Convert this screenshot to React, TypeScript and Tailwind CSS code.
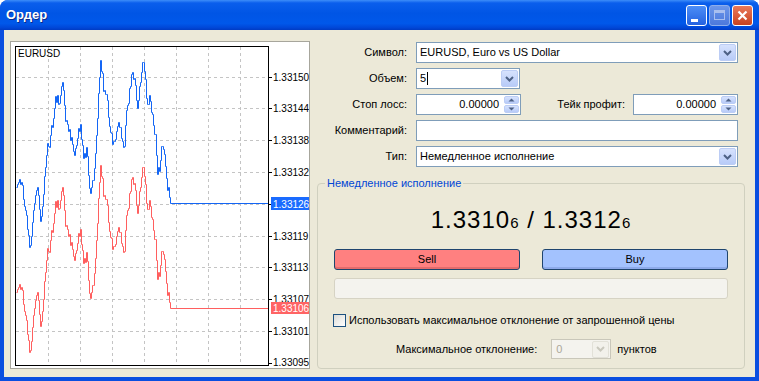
import React from "react";

function mulberry32(a: number) {
  return function () {
    a |= 0;
    a = (a + 0x6d2b79f5) | 0;
    let t = Math.imul(a ^ (a >>> 15), 1 | a);
    t = (t + Math.imul(t ^ (t >>> 7), 61 | t)) ^ t;
    return ((t ^ (t >>> 14)) >>> 0) / 4294967296;
  };
}

const KEYS: [number, number][] = [
  [16, 187], [19, 177], [21, 180], [23, 200], [26, 215], [29, 244], [31, 240], [33, 215],
  [36, 190], [38, 195], [40, 222], [42, 200], [45, 165], [47, 150], [50, 135], [53, 120],
  [55, 95], [58, 100], [61, 92], [63, 88], [65, 120], [68, 128], [70, 140], [73, 150],
  [76, 145], [80, 125], [83, 158], [86, 150], [88, 175], [90, 198], [93, 175], [96, 135],
  [98, 90], [100, 63], [103, 88], [106, 100], [109, 125], [112, 145], [115, 130], [118, 120],
  [121, 138], [124, 140], [127, 105], [130, 80], [132, 68], [135, 90], [137, 108], [140, 80],
  [143, 63], [146, 95], [149, 100], [152, 112], [155, 140], [157, 175], [160, 165], [162, 142],
  [164, 150], [166, 170], [168, 190], [170, 203],
];

function buildPoints() {
  const rnd = mulberry32(11);
  const pts: number[] = [];
  let n = 0;
  for (let x = 16; x <= 170; x++) {
    let i = 0;
    while (i < KEYS.length - 2 && KEYS[i + 1][0] < x) i++;
    const [x0, y0] = KEYS[i];
    const [x1, y1] = KEYS[i + 1];
    const t = x1 === x0 ? 0 : Math.max(0, Math.min(1, (x - x0) / (x1 - x0)));
    const base = y0 + (y1 - y0) * t;
    n = n * 0.35 + (rnd() - 0.5) * 14;
    let y = base + n;
    if (x >= 169) y = base;
    pts.push(Math.round(y));
  }
  return pts;
}

const PTS = buildPoints();

function toPath(dy: number, endY: number) {
  let d = `M16.5 ${PTS[0] + dy + 0.5}`;
  for (let i = 1; i < PTS.length; i++) {
    d += ` H${16 + i + 0.5} V${PTS[i] + dy + 0.5}`;
  }
  d += ` V${endY + 0.5} H268`;
  return d;
}

const GRID_Y = [0, 1, 2, 3, 4, 5, 6, 7, 8].map((k) => 76.5 + 31.8 * k);
const GRID_X = [0, 1, 2, 3, 4, 5, 6].map((k) => 48.5 + 32 * k);
const LABELS = ["1.33150", "1.33144", "1.33138", "1.33132", "", "1.33119", "1.33113", "1.33107", "1.33101"];

function Chart() {
  return (
    <div className="w-[300px] h-[328px] border border-[#A7A69C] bg-white">
      <svg width={298} height={326} viewBox="11 42 298 326" className="block">
        <rect x={11} y={42} width={298} height={326} fill="#fff" />
        {GRID_Y.map((y, i) => (
          <line key={"h" + i} x1={16} x2={268} y1={Math.round(y) + 0.5} y2={Math.round(y) + 0.5} stroke="#C4C4C4" strokeDasharray="3 3" />
        ))}
        {GRID_X.map((x, i) => (
          <line key={"v" + i} x1={x} x2={x} y1={47} y2={365} stroke="#C4C4C4" strokeDasharray="3 3" />
        ))}
        <path d={toPath(105, 308)} fill="none" stroke="#FF5F5F" strokeWidth={1} />
        <path d={toPath(0, 203)} fill="none" stroke="#1466F5" strokeWidth={1} />
        <rect x={15.5} y={46.5} width={253} height={319} fill="none" stroke="#000" />
        {GRID_Y.map((y, i) => (
          <line key={"t" + i} x1={268} x2={272} y1={Math.round(y) + 0.5} y2={Math.round(y) + 0.5} stroke="#000" />
        ))}
        <line x1={268} x2={272} y1={363.5} y2={363.5} stroke="#000" />
        <g fontFamily="'Liberation Sans', Arial, sans-serif" fontSize={10} fill="#000">
          <text x={18} y={57} fontSize={10}>EURUSD</text>
          {GRID_Y.map((y, i) =>
            LABELS[i] ? (
              <text key={"l" + i} x={273} y={Math.round(y) + 4}>
                {LABELS[i]}
              </text>
            ) : null
          )}
          <text x={273} y={366}>1.33095</text>
          <rect x={271} y={197} width={38} height={13} fill="#1A6BFF" />
          <text x={273} y={207.5} fill="#fff">1.33126</text>
          <rect x={271} y={302} width={38} height={12} fill="#FF6464" />
          <text x={273} y={312} fill="#fff">1.33106</text>
        </g>
      </svg>
    </div>
  );
}

function Chevron({ color = "#4D6185" }: { color?: string }) {
  return (
    <svg width="9" height="6" viewBox="0 0 9 6">
      <path d="M1 1 L4.5 4.5 L8 1" fill="none" stroke={color} strokeWidth="2" />
    </svg>
  );
}

function DropBtn({ disabled = false }: { disabled?: boolean }) {
  return (
    <div
      className={
        disabled
          ? "mr-[1px] flex h-[17px] w-[17px] items-center justify-center rounded-[2px] border border-[#E2E1D8] bg-[#F2F1EB]"
          : "mr-[1px] flex h-[17px] w-[17px] items-center justify-center rounded-[2px] border border-[#BCCDF5] bg-[linear-gradient(to_bottom,#D6E2FD,#B8CBF8)]"
      }
    >
      <Chevron color={disabled ? "#C9C8BD" : "#4D6185"} />
    </div>
  );
}

function SpinBtn() {
  return (
    <div className="mr-[1px] flex h-[17px] w-[15px] flex-col gap-[1px]">
      <div className="flex h-[8px] items-center justify-center rounded-[2px] border border-[#BCCDF5] bg-[linear-gradient(to_bottom,#D6E2FD,#B8CBF8)]">
        <svg width="7" height="4" viewBox="0 0 7 4">
          <path d="M0.5 3.5 L3.5 0.5 L6.5 3.5 Z" fill="#4D6185" />
        </svg>
      </div>
      <div className="flex h-[8px] items-center justify-center rounded-[2px] border border-[#BCCDF5] bg-[linear-gradient(to_bottom,#D6E2FD,#B8CBF8)]">
        <svg width="7" height="4" viewBox="0 0 7 4">
          <path d="M0.5 0.5 L3.5 3.5 L6.5 0.5 Z" fill="#4D6185" />
        </svg>
      </div>
    </div>
  );
}

function Label({ children }: { children: React.ReactNode }) {
  return <div className="w-[97px] shrink-0 text-right">{children}</div>;
}

function TitleBar() {
  return (
    <div className="flex h-[30px] shrink-0 items-center rounded-t-[8px] bg-[linear-gradient(to_bottom,#3D8DF9_0%,#0A5EEC_10%,#0055E5_45%,#0058EA_78%,#0047D8_92%,#003BC3_100%)] pl-[6px] pr-[6px]">
      <div className="flex-1 text-[13px] font-bold text-white [text-shadow:1px_1px_0_#0B2A8A]">Ордер</div>
      <div className="flex items-center gap-[2px]">
        <div className="relative h-[21px] w-[21px] rounded-[3px] border border-white bg-[linear-gradient(to_bottom,#4C8EF7,#2462E0)]">
          <div className="absolute left-[4px] top-[13px] h-[3px] w-[7px] bg-white" />
        </div>
        <div className="relative flex h-[21px] w-[21px] items-center justify-center rounded-[3px] border border-[#8FAEEB] bg-[linear-gradient(to_bottom,#6C96EA,#4C79DC)]">
          <div className="h-[10px] w-[11px] border border-t-[3px] border-[#A9BFEF]" />
        </div>
        <div className="relative flex h-[21px] w-[21px] items-center justify-center rounded-[3px] border border-white bg-[linear-gradient(to_bottom,#E9795A,#C9421F)]">
          <svg width="11" height="11" viewBox="0 0 11 11">
            <path d="M1.5 1.5 L9.5 9.5 M9.5 1.5 L1.5 9.5" stroke="#fff" strokeWidth="2.2" />
          </svg>
        </div>
      </div>
    </div>
  );
}

export default function App() {
  return (
    <div className="h-[381px] w-[759px] bg-white font-['Liberation_Sans',Arial,sans-serif] text-[11px] text-black">
      <div className="flex h-full w-full flex-col rounded-t-[8px] bg-[#0A4EE0]">
        <TitleBar />
        <div className="mx-[4px] mb-[4px] flex flex-1 bg-[#ECE9D8] pb-[8px] pl-[6px] pt-[11px]">
          <Chart />
          <div className="flex flex-1 flex-col">
            <div className="flex flex-col gap-[5px] pr-[17px] pt-[1px]">
              <div className="flex h-[21px] items-center gap-[9px]">
                <Label>Символ:</Label>
                <div className="flex h-[21px] flex-1 items-center border border-[#7F9DB9] bg-white">
                  <span className="flex-1 pl-[3px]">EURUSD, Euro vs US Dollar</span>
                  <DropBtn />
                </div>
              </div>
              <div className="flex h-[21px] items-center gap-[9px]">
                <Label>Объем:</Label>
                <div className="flex h-[21px] w-[104px] items-center border border-[#7F9DB9] bg-white">
                  <span className="flex flex-1 items-center pl-[3px]">
                    5<span className="ml-[1px] inline-block h-[13px] w-[1px] bg-black" />
                  </span>
                  <DropBtn />
                </div>
              </div>
              <div className="flex h-[21px] items-center">
                <Label>Стоп лосс:</Label>
                <div className="ml-[9px] flex h-[21px] w-[105px] items-center border border-[#7F9DB9] bg-white">
                  <span className="flex-1 pr-[5px] text-right">0.00000</span>
                  <SpinBtn />
                </div>
                <div className="flex-1 text-right">Тейк профит:</div>
                <div className="ml-[8px] flex h-[21px] w-[105px] items-center border border-[#7F9DB9] bg-white">
                  <span className="flex-1 pr-[5px] text-right">0.00000</span>
                  <SpinBtn />
                </div>
              </div>
              <div className="flex h-[21px] items-center gap-[9px]">
                <Label>Комментарий:</Label>
                <div className="h-[21px] flex-1 border border-[#7F9DB9] bg-white" />
              </div>
              <div className="flex h-[21px] items-center gap-[9px]">
                <Label>Тип:</Label>
                <div className="flex h-[21px] flex-1 items-center border border-[#7F9DB9] bg-white">
                  <span className="flex-1 pl-[3px]">Немедленное исполнение</span>
                  <DropBtn />
                </div>
              </div>
            </div>
            <fieldset className="ml-[7px] mr-[10px] mt-[10px] flex flex-1 flex-col rounded-[4px] border border-[#D0D0BF]">
              <legend className="ml-[7px] px-[2px] text-[11px] leading-[13px] text-[#0046D5]">Немедленное исполнение</legend>
              <div className="flex flex-1 flex-col px-[16px]">
                <div className="mt-[15px] h-[30px] text-center text-[24px] leading-[30px] tracking-[1px] text-black">
                  1.3310<span className="text-[15px]">6</span> / 1.3312<span className="text-[15px]">6</span>
                </div>
                <div className="mt-[14px] flex justify-between">
                  <div className="flex h-[21px] w-[186px] items-center justify-center rounded-[3px] border border-[#1F456E] bg-[#FF8080] shadow-[inset_0_-2px_0_#E46C6C]">
                    Sell
                  </div>
                  <div className="flex h-[21px] w-[186px] items-center justify-center rounded-[3px] border border-[#1F456E] bg-[#A3C2FE] shadow-[inset_0_-2px_0_#8DAAEA]">
                    Buy
                  </div>
                </div>
                <div className="mt-[8px] h-[21px] rounded-[3px] border border-[#D6D3C4] bg-[#F4F3EE]" />
                <div className="mt-[15px] ml-[-1px] flex h-[13px] items-center gap-[3px]">
                  <div className="h-[13px] w-[13px] border border-[#1C5180] bg-[linear-gradient(135deg,#DCDCD7,#FFFFFF)]" />
                  <span>Использовать максимальное отклонение от запрошенной цены</span>
                </div>
                <div className="ml-[62px] mt-[12px] flex h-[20px] items-center">
                  <span>Максимальное отклонение:</span>
                  <div className="ml-[14px] flex h-[20px] w-[60px] items-center border border-[#C9C7BA] bg-[#F4F3EE]">
                    <span className="flex-1 pl-[4px] text-[#ACA899]">0</span>
                    <DropBtn disabled />
                  </div>
                  <span className="ml-[6px]">пунктов</span>
                </div>
              </div>
            </fieldset>
          </div>
        </div>
      </div>
    </div>
  );
}
